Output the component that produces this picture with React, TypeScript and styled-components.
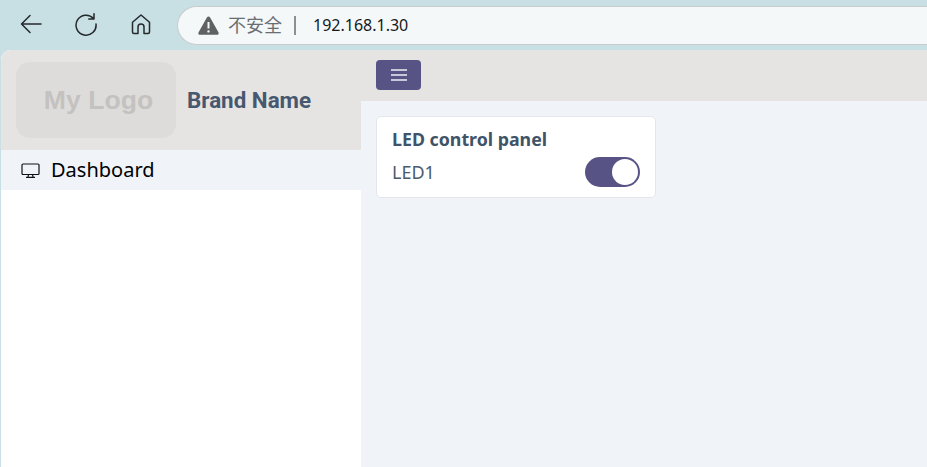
import React from "react";
import styled, { createGlobalStyle } from "styled-components";

const GlobalStyle = createGlobalStyle`
  html, body {
    margin: 0;
    padding: 0;
    height: 100%;
    overflow: hidden;
    background: #c8dfe3;
    font-family: "Noto Sans", "Noto Sans CJK SC", sans-serif;
  }
  #root {
    height: 100%;
  }
`;

const Shell = styled.div`
  display: flex;
  flex-direction: column;
  width: 927px;
  height: 467px;
`;

const BrowserBar = styled.div`
  display: flex;
  align-items: center;
  height: 50px;
  flex: none;
  box-sizing: border-box;
  background: #c8dfe3;
`;

const NavIcons = styled.div`
  display: flex;
  align-items: center;
  width: 177px;
  flex: none;
  padding: 0 0 2px 19px;
  box-sizing: border-box;
  gap: 31px;
`;

const NavIcon = styled.svg`
  width: 24px;
  height: 24px;
  display: block;
  fill: none;
  stroke: #24292c;
  stroke-width: 1.5;
  stroke-linecap: round;
  stroke-linejoin: round;
`;

const AddressBar = styled.div`
  display: flex;
  align-items: center;
  flex: 1;
  height: 39px;
  padding-left: 20px;
  box-sizing: border-box;
  background: #f4f8f9;
  border: 1px solid #c9cccd;
  border-right: none;
  border-radius: 20px 0 0 20px;
`;

const Warning = styled.svg`
  width: 21px;
  height: 19px;
  display: block;
  flex: none;
`;

const InsecureLabel = styled.span`
  margin: 0 0 2px 9px;
  font-size: 18px;
  color: #6b6e70;
  font-family: "Noto Sans CJK SC", sans-serif;
`;

const Divider = styled.span`
  width: 2px;
  height: 19px;
  margin: 0 17px 0 12px;
  background: #8d9092;
`;

const Url = styled.span`
  font-size: 16px;
  color: #16191b;
`;

const Page = styled.div`
  display: flex;
  flex: 1;
  min-height: 0;
  margin-left: 1px;
  border-top-left-radius: 10px;
  overflow: hidden;
  background: #f0f4f9;
`;

const Sidebar = styled.aside`
  display: flex;
  flex-direction: column;
  width: 360px;
  flex: none;
  background: #ffffff;
`;

const SidebarHeader = styled.div`
  display: flex;
  align-items: center;
  gap: 11px;
  height: 100px;
  padding-left: 15px;
  box-sizing: border-box;
  background: #e6e4e2;
`;

const LogoBox = styled.div`
  display: flex;
  align-items: center;
  justify-content: center;
  width: 160px;
  height: 76px;
  padding: 1px 0 0 5px;
  box-sizing: border-box;
  border-radius: 14px;
  background: #dedcda;
  color: #c4c2c0;
  font-family: "Liberation Sans", Arial, sans-serif;
  font-size: 26.6px;
  font-weight: 700;
`;

const BrandName = styled.span`
  color: #465870;
  font-family: "Roboto", sans-serif;
  font-size: 22.4px;
  font-weight: 700;
`;

const NavItem = styled.div`
  display: flex;
  align-items: center;
  gap: 11px;
  height: 40px;
  padding: 0 0 2px 20px;
  box-sizing: border-box;
  background: #f0f4f9;
  color: #000000;
  font-size: 20px;
`;

const MonitorIcon = styled.svg`
  width: 19px;
  height: 19px;
  display: block;
  margin-top: 2px;
  fill: none;
  stroke: #111111;
  stroke-width: 1.2;
`;

const Main = styled.main`
  display: flex;
  flex-direction: column;
  flex: 1;
  min-width: 0;
`;

const TopBar = styled.div`
  display: flex;
  align-items: center;
  height: 51px;
  padding: 0 0 1px 15px;
  box-sizing: border-box;
  background: #e6e4e2;
`;

const MenuButton = styled.button`
  display: flex;
  flex-direction: column;
  align-items: center;
  justify-content: center;
  gap: 3px;
  width: 45px;
  height: 30px;
  padding: 0;
  border: none;
  border-radius: 4px;
  background: #575385;
`;

const MenuLine = styled.span`
  display: block;
  width: 16px;
  height: 2px;
  background: #c9c7da;
`;

const Content = styled.div`
  padding: 15px 0 0 15px;
`;

const Card = styled.section`
  width: 280px;
  height: 82px;
  padding: 10px 15px 0;
  box-sizing: border-box;
  background: #ffffff;
  border: 1px solid #e3e6ec;
  border-radius: 5px;
`;

const CardTitle = styled.h2`
  margin: 0;
  color: #3f5468;
  font-size: 17.8px;
  line-height: 24px;
  font-weight: 700;
`;

const SwitchRow = styled.div`
  display: flex;
  align-items: center;
  justify-content: space-between;
  height: 30px;
  margin-top: 6px;
`;

const SwitchLabel = styled.span`
  color: #4a5b6d;
  font-size: 18px;
`;

const Toggle = styled.div`
  display: flex;
  align-items: center;
  justify-content: flex-end;
  width: 55px;
  height: 30px;
  padding-right: 2px;
  box-sizing: border-box;
  border-radius: 15px;
  background: #575385;
`;

const Knob = styled.span`
  width: 26px;
  height: 26px;
  border-radius: 50%;
  background: #ffffff;
`;

export default function App() {
  return (
    <Shell>
      <GlobalStyle />
      <BrowserBar>
        <NavIcons>
          <NavIcon viewBox="0 0 24 24">
            <path d="M22 12H2.500M11 3.500 2.500 12l8.500 8.500" />
          </NavIcon>
          <NavIcon viewBox="0 0 24 24">
            <path d="M19.500 6.500A10 10 0 1 0 22 12M20 1.800v5.200h-5.200" />
          </NavIcon>
          <NavIcon viewBox="0 0 24 24">
            <path d="M3.500 10.200 12 3l8.500 7.200V20a1.500 1.500 0 0 1-1.500 1.500h-4V15a3 3 0 0 0-6 0v6.500H5A1.500 1.500 0 0 1 3.500 20Z" />
          </NavIcon>
        </NavIcons>
        <AddressBar>
          <Warning viewBox="0 0 21 19">
            <path
              fill="#5f6163"
              fillRule="evenodd"
              d="M10.500.5c.7 0 1.200.3 1.600 1l8.300 14.700c.7 1.300-.1 2.600-1.500 2.600H2.100C.7 18.800-.1 17.500.6 16.200L8.900 1.500c.4-.7.900-1 1.600-1ZM9.500 6v6.500h2V6Zm1 8.200a1.200 1.200 0 1 0 0 2.400 1.200 1.200 0 0 0 0-2.400Z"
            />
          </Warning>
          <InsecureLabel>不安全</InsecureLabel>
          <Divider />
          <Url>192.168.1.30</Url>
        </AddressBar>
      </BrowserBar>
      <Page>
        <Sidebar>
          <SidebarHeader>
            <LogoBox>My Logo</LogoBox>
            <BrandName>Brand Name</BrandName>
          </SidebarHeader>
          <NavItem>
            <MonitorIcon viewBox="0 0 19 19">
              <rect x="1" y="3" width="17" height="10.500" rx="1" />
              <path d="M7.500 13.500 7 16M11.500 13.500l.5 2.500M5 16.300h9" />
            </MonitorIcon>
            Dashboard
          </NavItem>
        </Sidebar>
        <Main>
          <TopBar>
            <MenuButton aria-label="Toggle sidebar">
              <MenuLine />
              <MenuLine />
              <MenuLine />
            </MenuButton>
          </TopBar>
          <Content>
            <Card>
              <CardTitle>LED control panel</CardTitle>
              <SwitchRow>
                <SwitchLabel>LED1</SwitchLabel>
                <Toggle>
                  <Knob />
                </Toggle>
              </SwitchRow>
            </Card>
          </Content>
        </Main>
      </Page>
    </Shell>
  );
}
